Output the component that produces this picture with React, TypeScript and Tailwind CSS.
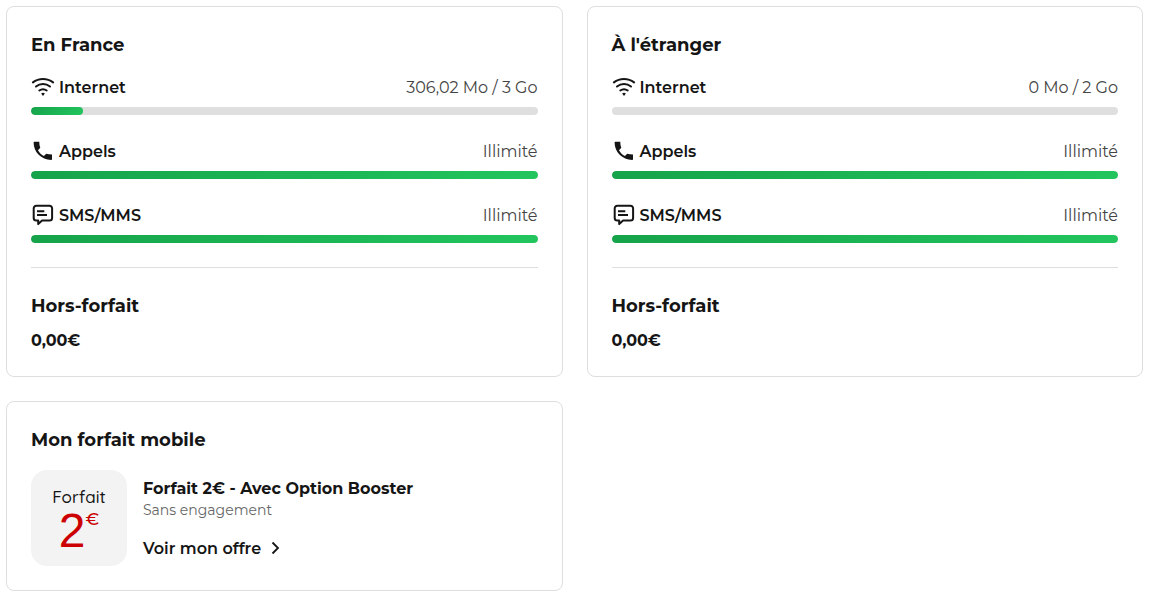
import type { ReactNode } from 'react';

function WifiIcon() {
  return (
    <svg viewBox="0 0 24 24" className="size-6 shrink-0" fill="none" stroke="currentColor" strokeWidth="2" strokeLinecap="round" aria-hidden="true">
      <path d="M1.900 7.400A16.500 16.500 0 0 1 22.100 7.400" />
      <path d="M5 11.500A11.200 11.200 0 0 1 19 11.500" />
      <path d="M8.300 15.500A6.300 6.300 0 0 1 15.700 15.500" />
      <path d="M12 20.900l-1.900-2.400Q12 17.100 13.900 18.500z" fill="currentColor" stroke="none" />
    </svg>
  );
}

function PhoneIcon() {
  return (
    <svg viewBox="0 0 24 24" className="size-6 shrink-0" fill="currentColor" aria-hidden="true">
      <path d="M21 15.400V20.300Q21 21 20.200 21C10.300 20.800 2.600 13.200 2.600 3.600Q2.600 2.800 3.300 2.800H8.300C8.300 5.200 8.600 7 9.300 8.700L7 11.200C8.400 13.800 10.400 15.800 12.900 17.100L15.200 14.700C17 15.200 18.900 15.400 21 15.400z" />
    </svg>
  );
}

function MessageIcon() {
  return (
    <svg viewBox="0 0 24 24" className="size-6 shrink-0" fill="none" stroke="currentColor" strokeWidth="2" strokeLinejoin="round" aria-hidden="true">
      <path d="M5.300 2.800h13.200a2.600 2.600 0 0 1 2.600 2.600v9.600a2.600 2.600 0 0 1-2.600 2.600h-7.400l-3.900 3.500v-3.500H5.300a2.600 2.600 0 0 1-2.600-2.600V5.400a2.600 2.600 0 0 1 2.600-2.600z" />
      <path d="M6 8.300h7.300M6 12h10" />
    </svg>
  );
}

function Card({ title, children }: { title: string; children: ReactNode }) {
  return (
    <section className="rounded-lg border border-[#dedede] bg-white p-6">
      <h2 className="mb-4 text-lg font-bold leading-7">{title}</h2>
      {children}
    </section>
  );
}

type UsageProps = { icon: ReactNode; label: string; value: string; percent: number };

function Usage({ icon, label, value, percent }: UsageProps) {
  return (
    <div>
      <div className="mb-2 flex h-6 items-start justify-between leading-[26px]">
        <div className="flex items-start gap-1 font-semibold">
          {icon}
          <span>{label}</span>
        </div>
        <span className="text-[#444444]">{value}</span>
      </div>
      <div
        role="progressbar"
        aria-label={label}
        aria-valuenow={percent}
        aria-valuetext={value}
        className="h-2 overflow-hidden rounded-full bg-[#dfdfdf]"
      >
        <div
          className="h-full rounded-full bg-[linear-gradient(135deg,#16a34a,#22c55e)]"
          style={{ width: `${percent}%` }}
        />
      </div>
    </div>
  );
}

function UsageCard({ title, data, percent }: { title: string; data: string; percent: number }) {
  return (
    <Card title={title}>
      <div className="flex flex-col gap-6 border-b border-[#dedede] pb-6">
        <Usage icon={<WifiIcon />} label="Internet" value={data} percent={percent} />
        <Usage icon={<PhoneIcon />} label="Appels" value="Illimité" percent={100} />
        <Usage icon={<MessageIcon />} label="SMS/MMS" value="Illimité" percent={100} />
      </div>
      <h3 className="mb-2 mt-6 text-lg font-bold leading-7">Hors-forfait</h3>
      <p className="h-6 font-bold leading-[26px]">0,00€</p>
    </Card>
  );
}

export default function App() {
  return (
    <main className="grid grid-cols-2 gap-6 bg-white p-1.5 font-['Montserrat','Inter',sans-serif] text-base text-[#151515]">
      <UsageCard title="En France" data="306,02 Mo / 3 Go" percent={10.2} />
      <UsageCard title="À l'étranger" data="0 Mo / 2 Go" percent={0} />
      <Card title="Mon forfait mobile">
        <div className="flex items-center gap-4">
          <div className="flex size-24 shrink-0 flex-col items-center justify-center rounded-2xl bg-[#f3f3f3] pt-0.5">
            <span className="font-['Quicksand','Montserrat_Alternates','Montserrat',sans-serif] text-[17px] font-medium leading-6">Forfait</span>
            <span className="flex items-start text-[#cc0000]">
              <span className="font-['Liberation_Sans',sans-serif] text-5xl leading-11">2</span>
              <span className="text-[17px] font-medium leading-5">€</span>
            </span>
          </div>
          <div>
            <h3 className="h-6 font-bold leading-[26px]">Forfait 2€ - Avec Option Booster</h3>
            <p className="mb-4 text-sm text-[#666666]">Sans engagement</p>
            <a href="#offre" className="flex h-6 items-start gap-2 font-semibold leading-[26px]">
              Voir mon offre
              <svg viewBox="0 0 12 24" className="h-6 w-3" fill="none" stroke="currentColor" strokeWidth="1.8" aria-hidden="true">
                <path d="M3.500 6.500L9 12l-5.500 5.500" />
              </svg>
            </a>
          </div>
        </div>
      </Card>
    </main>
  );
}
